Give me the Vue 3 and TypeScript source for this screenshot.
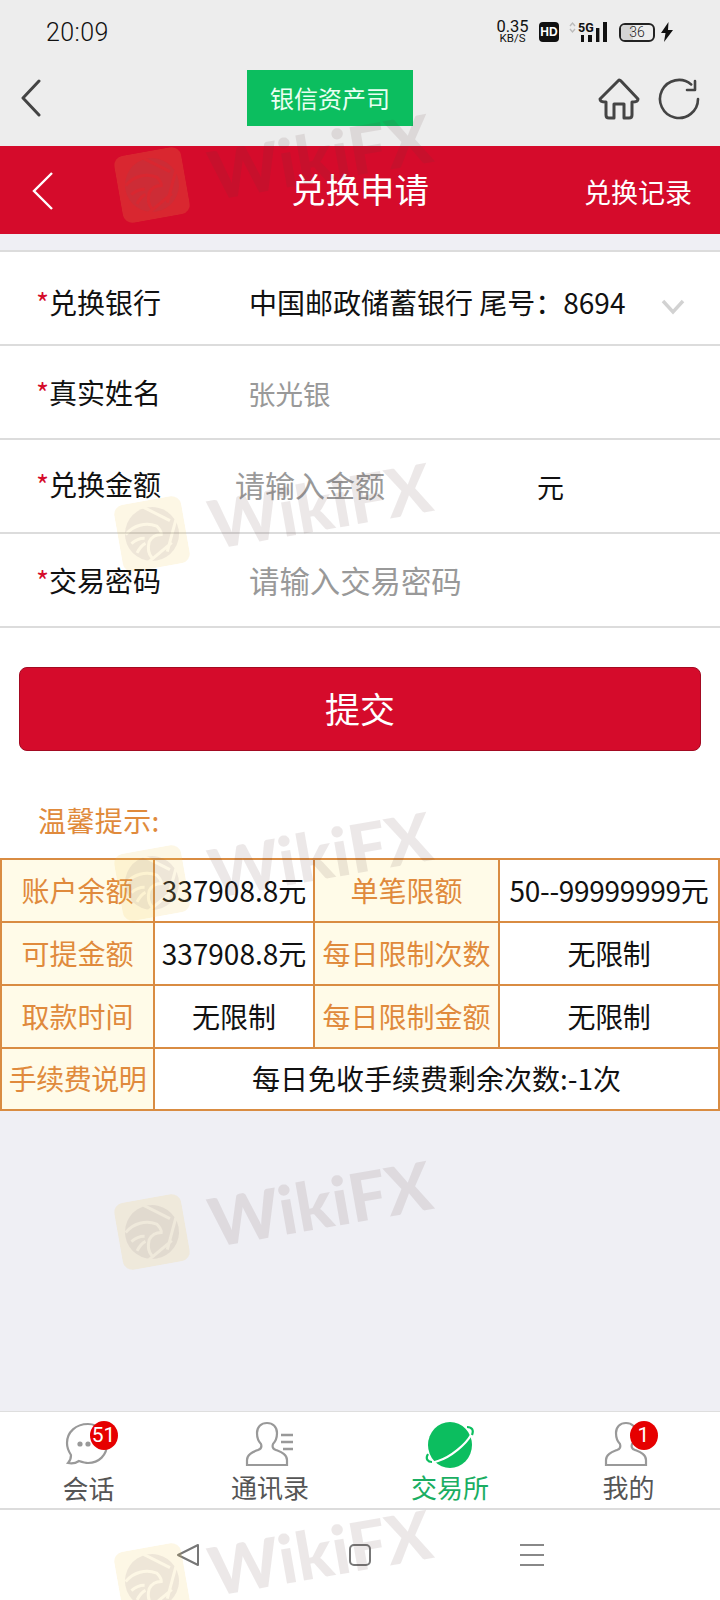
<script setup lang="ts">
const marks = [0, 1, 2, 3, 4].map((i) => 151 + i * 349);

const rows = [
  { label: '账户余额', value: '337908.8元', label2: '单笔限额', value2: '50--99999999元' },
  { label: '可提金额', value: '337908.8元', label2: '每日限制次数', value2: '无限制' },
  { label: '取款时间', value: '无限制', label2: '每日限制金额', value2: '无限制' },
];
</script>

<template>
  <div class="page">
    <header class="top">
      <div class="status">
        <span class="clock">20:09</span>
        <div class="status__right">
          <div class="speed"><b>0.35</b><small>KB/S</small></div>
          <span class="hd">HD</span>
          <svg class="signal" width="38" height="20" viewBox="0 0 38 20">
            <path d="M1 4l2.5-3L6 4M1 7l2.5 3L6 7" fill="none" stroke="#bbb" stroke-width="1.4" />
            <text x="9" y="10" font-size="12.5" font-weight="700" font-family="Roboto, sans-serif" fill="#111">5G</text>
            <rect x="12" y="13" width="3" height="7" fill="#111" />
            <rect x="19" y="13" width="4" height="7" fill="#111" />
            <rect x="27" y="6" width="3.4" height="14" fill="#111" />
            <rect x="34" y="0" width="4" height="20" fill="#111" />
          </svg>
          <div class="battery"><i class="battery__fill"></i><span>36</span></div>
          <svg class="bolt" width="12" height="20" viewBox="0 0 12 20"><path d="M7.5 0L0 11h4.5L3 20l9-12H7z" fill="#111" /></svg>
        </div>
      </div>
      <div class="toolbar">
        <svg class="toolbar__back" width="22" height="38" viewBox="0 0 22 38">
          <path d="M19 2L3 19l16 17" fill="none" stroke="#444" stroke-width="3" stroke-linecap="round" stroke-linejoin="round" />
        </svg>
        <div class="site">银信资产司</div>
        <div class="toolbar__tools">
          <svg width="42" height="42" viewBox="0 0 42 42" fill="none" stroke="#444" stroke-width="3" stroke-linejoin="round" stroke-linecap="round">
            <path d="M21 2L2 21c0 2 2 3 6 3v13c0 2 1 3 3 3h5V26h10v14h5c2 0 3-1 3-3V24c4 0 6-1 6-3L23 3a3 3 0 00-2-1z" />
          </svg>
          <svg width="42" height="42" viewBox="0 0 42 42" fill="none" stroke="#444" stroke-width="2.6" stroke-linecap="round" stroke-linejoin="round">
            <path d="M33.2 6.4A19 19 0 1040 21" />
            <path d="M37 3v9h-8" />
          </svg>
        </div>
      </div>
    </header>

    <div class="titlebar">
      <svg class="titlebar__back" width="22" height="38" viewBox="0 0 22 38">
        <path d="M20 1L2 19l18 18" fill="none" stroke="#fff" stroke-width="2.4" />
      </svg>
      <h1 class="titlebar__title">兑换申请</h1>
      <span class="titlebar__link">兑换记录</span>
    </div>

    <main class="main">
      <section class="card">
        <form class="form" @submit.prevent>
          <div class="row row--bank">
            <label class="row__label"><em>*</em>兑换银行</label>
            <span class="row__value">中国邮政储蓄银行 尾号：8694</span>
            <svg class="row__chevron" width="24" height="16" viewBox="0 0 24 16">
              <path d="M2 2l10 11L22 2" fill="none" stroke="#d2d2d2" stroke-width="3.4" />
            </svg>
          </div>
          <div class="row">
            <label class="row__label"><em>*</em>真实姓名</label>
            <span class="row__value row__value--muted">张光银</span>
          </div>
          <div class="row row--amount">
            <label class="row__label"><em>*</em>兑换金额</label>
            <input class="row__input row__input--amount" placeholder="请输入金额" />
            <span class="row__unit">元</span>
          </div>
          <div class="row">
            <label class="row__label"><em>*</em>交易密码</label>
            <input class="row__input" type="password" placeholder="请输入交易密码" />
          </div>
        </form>

        <button class="submit" type="button">提交</button>

        <p class="hint">温馨提示:</p>

        <table class="limits">
          <colgroup>
            <col class="col-a" />
            <col class="col-b" />
            <col class="col-c" />
            <col />
          </colgroup>
          <tbody>
            <tr v-for="r in rows" :key="r.label">
              <th>{{ r.label }}</th>
              <td>{{ r.value }}</td>
              <th>{{ r.label2 }}</th>
              <td class="narrow">{{ r.value2 }}</td>
            </tr>
            <tr class="last">
              <th class="tight">手续费说明</th>
              <td colspan="3">每日免收手续费剩余次数:-1次</td>
            </tr>
          </tbody>
        </table>
      </section>
    </main>

    <nav class="tabs">
      <div class="tab tab--left">
        <div class="tab__icon tab__icon--chat">
          <svg width="44" height="44" viewBox="0 0 44 44" fill="none" stroke="#999" stroke-width="2.2">
            <path d="M23 2C11 2 2 10 2 21c0 5 2 9 4 12 0 3-1 6-3 8 4 1 8 0 11-2 3 1 6 2 9 2 11 0 19-8 19-19S34 2 23 2z" />
            <circle cx="15" cy="22" r="2.6" fill="#999" stroke="none" />
            <circle cx="23" cy="22" r="2.6" fill="#999" stroke="none" />
          </svg>
          <span class="badge badge--chat">51</span>
        </div>
        <span>会话</span>
      </div>
      <div class="tab">
        <div class="tab__icon">
          <svg width="50" height="46" viewBox="0 0 50 46" fill="none" stroke="#999" stroke-width="2.2">
            <path d="M2 44v-5c0-6 6-8 11-10 3-1 4-3 3-6-3-3-4-7-4-11C12 6 16 2 22 2s10 4 10 10c0 4-1 8-4 11-1 3 0 5 3 6 5 2 11 4 11 10v5z" />
            <path d="M36 14h12M36 21h12M38 28h10" stroke-width="2.6" />
          </svg>
        </div>
        <span>通讯录</span>
      </div>
      <div class="tab tab--active">
        <div class="tab__icon">
          <svg width="50" height="48" viewBox="0 0 50 48">
            <ellipse cx="25" cy="24" rx="22" ry="23" fill="#0cbe5f" />
            <path d="M3 37c-3 5 2 6 10 3 13-4 28-17 33-26 2-5-1-7-5-7" fill="none" stroke="#fff" stroke-width="2.2" />
            <path d="M3 33c-3 5 0 8 4 8M42 6c5 0 7 3 5 8" fill="none" stroke="#0cbe5f" stroke-width="2.2" />
          </svg>
        </div>
        <span>交易所</span>
      </div>
      <div class="tab tab--left">
        <div class="tab__icon tab__icon--me">
          <svg width="46" height="46" viewBox="0 0 46 46" fill="none" stroke="#999" stroke-width="2.2">
            <path d="M2 44v-5c0-6 6-8 11-10 3-1 4-3 3-6-3-3-4-7-4-11C12 6 16 2 22 2s10 4 10 10c0 4-1 8-4 11-1 3 0 5 3 6 5 2 11 4 11 10v5z" />
          </svg>
          <span class="badge badge--me">1</span>
        </div>
        <span>我的</span>
      </div>
    </nav>

    <footer class="sysnav">
      <svg width="24" height="24" viewBox="0 0 24 24" fill="none" stroke="#777" stroke-width="2" stroke-linejoin="round">
        <path d="M22 2v20L2 12z" />
      </svg>
      <svg width="24" height="24" viewBox="0 0 24 24" fill="none" stroke="#777" stroke-width="2">
        <rect x="2" y="2" width="20" height="20" rx="4" />
      </svg>
      <svg width="26" height="24" viewBox="0 0 26 24" fill="none" stroke="#888" stroke-width="2">
        <path d="M1 2h24M1 12h24M1 22h24" />
      </svg>
    </footer>

    <div class="watermarks" aria-hidden="true">
      <div v-for="top in marks" :key="top" class="mark" :style="{ top: top + 'px' }">
        <svg class="mark__logo" width="68" height="68" viewBox="0 0 68 68">
          <defs>
            <mask :id="'cut' + top">
              <rect width="68" height="68" fill="#fff" />
              <g fill="none" stroke="#000" stroke-width="3">
                <path d="M30 6l24 18M60 24L46 54M52 46L24 62" />
                <path d="M8 30c9-8 22-9 32-3 2 3 4 6 3 9-6-1-10 1-13 5-3 6-3 12 0 17" />
                <path d="M12 40c5-3 9-4 14-3M16 50c3-4 6-7 10-8" />
              </g>
            </mask>
          </defs>
          <rect width="68" height="68" rx="10" fill="#f0c850" fill-opacity=".15" />
          <circle cx="34" cy="34" r="27" fill="#6e5a70" fill-opacity=".1" :mask="'url(#cut' + top + ')'" />
        </svg>
        <span class="mark__text">WikiFX</span>
      </div>
    </div>
  </div>
</template>

<style>
html, body { margin: 0; padding: 0; background: #fff; }
</style>

<style scoped>
.page {
  position: relative;
  display: flex; flex-direction: column;
  width: 720px; height: 1600px; overflow: hidden;
  background: #efeff4;
  font-family: "Noto Sans CJK SC", "Noto Sans", sans-serif;
  color: #111;
}

.top { background: #ededed; height: 146px; flex-shrink: 0; }
.status {
  display: flex; align-items: center; justify-content: space-between;
  height: 62px; padding: 2px 47px 0 46px; box-sizing: border-box;
}
.clock { font-family: Roboto, sans-serif; font-size: 25px; font-weight: 300; letter-spacing: .4px; color: #111; }
.status__right { display: flex; align-items: center; }
.speed { display: flex; flex-direction: column; align-items: center; width: 31px; font-family: Roboto, sans-serif; }
.speed b { font-size: 16.5px; font-weight: 400; line-height: 13px; }
.speed small { font-size: 11.5px; font-weight: 400; line-height: 11px; }
.hd {
  width: 20px; height: 20px; margin-left: 11px; border-radius: 4px; background: #111; color: #fff;
  font: 700 12px/20px "Liberation Sans", sans-serif; text-align: center;
}
.signal { margin-left: 10px; overflow: visible; }
.battery {
  position: relative; width: 36px; height: 19px; margin-left: 12px; box-sizing: border-box;
  border: 2px solid #222; border-radius: 6px; overflow: hidden;
  font: 300 14px/15px Roboto, sans-serif; text-align: center; color: #222;
}
.battery__fill { position: absolute; left: 0; top: 0; bottom: 0; width: 36%; background: #d4d4d4; }
.battery span { position: relative; }
.bolt { margin-left: 6px; }

.toolbar { display: flex; align-items: center; justify-content: space-between; height: 84px; padding: 0 20px; position: relative; }
.toolbar__back { margin-top: -12px; }
.site {
  position: absolute; left: 247px; top: 8px;
  width: 166px; height: 56px; background: #0cbe5f; color: #e8fff2;
  font-size: 24px; line-height: 56px; text-align: center;
}
.toolbar__tools { display: flex; gap: 18px; margin-top: -10px; }

.titlebar {
  display: flex; align-items: center; justify-content: center;
  position: relative; height: 88px; flex-shrink: 0; background: #d50b2b; color: #fff;
}
.titlebar__back { position: absolute; left: 32px; top: 26px; }
.titlebar__title { margin: 0 0 4px; font-size: 34.5px; font-weight: 400; line-height: 1; }
.titlebar__link { position: absolute; right: 28px; top: 28px; font-size: 27px; line-height: 36px; }

.main { flex: 1; padding-top: 16px; }
.card { background: #fff; border-top: 2px solid #dcdcdc; }

.row {
  display: flex; align-items: center; height: 92px; padding-left: 36px;
  border-bottom: 2px solid #dcdcdc; font-size: 28px;
}
.row--bank { padding-top: 8px; height: 84px; }
.row--amount { padding-bottom: 4px; height: 88px; }
.row__label { width: 213px; flex-shrink: 0; color: #111; }
.row__label em { color: #d50b2b; font-style: normal; }
.row__value { flex: 1; color: #111; }
.row__value--muted { margin-left: -1px; padding-top: 2px; font-size: 27.5px; color: #999; }
.row__chevron { margin-right: 35px; margin-top: 10px; }
.row__input {
  flex: 1; min-width: 0; padding: 0; border: 0; outline: none; background: transparent;
  font: inherit; font-size: 30.4px; color: #111;
}
.row__input::placeholder { color: #999; opacity: 1; }
.row__input--amount { flex: 0 0 302px; margin-left: -14px; font-size: 30px; }
.row__unit { font-size: 27px; padding-top: 4px; }

.submit {
  display: block; width: 682px; height: 84px; margin: 39px 0 0 19px; padding: 0 0 4px;
  border: 1px solid #a30a22; border-radius: 8px; background: #d50b2b; color: #fff;
  font: inherit; font-size: 35px;
}
.hint { margin: 0; padding: 49px 0 18px 38px; font-size: 28px; line-height: 40px; letter-spacing: .4px; color: #e08a3c; }

.limits {
  width: 720px; table-layout: fixed; border-collapse: collapse;
  font-size: 28px; line-height: 36px;
}
.col-a { width: 153px; }
.col-b { width: 160px; }
.col-c { width: 185px; }
.limits th, .limits td {
  height: 63px; padding: 0 0 2px; box-sizing: border-box; border: 2px solid #d98c42; text-align: center; white-space: nowrap;
}
.limits th { background: #fffbe8; color: #e08a3c; font-weight: 400; }
.limits td { background: #fff; color: #111; }
.limits .narrow { letter-spacing: -.3px; }
.limits .last th, .limits .last td { height: 62px; }
.tight { letter-spacing: -.5px; }

.tabs {
  display: grid; grid-template-columns: repeat(4, 1fr);
  flex-shrink: 0; height: 99px; box-sizing: border-box; padding-top: 9px;
  background: #fff; border-top: 1px solid #dedede; border-bottom: 2px solid #dcdcdc;
}
.tab { display: flex; flex-direction: column; align-items: center; font-size: 26px; line-height: 32px; color: #555; }
.tab--active { color: #1aae62; }
.tab--left { padding-right: 3px; }
.tab__icon { position: relative; height: 50px; display: flex; align-items: flex-start; }
.tab__icon--chat, .tab__icon--me { margin-left: -4px; }
.tab__icon--chat { padding-top: 1px; }
.badge {
  position: absolute; width: 28px; height: 29px; border-radius: 50%; background: #e60000; color: #fff;
  font: 400 21px/29px Roboto, sans-serif; text-align: center;
}
.badge--chat { right: -9px; top: 0; }
.badge--me { right: -8px; top: 0; }

.sysnav {
  display: flex; align-items: center; height: 90px; flex-shrink: 0; background: #fff;
  padding: 0 175px 0 176px; box-sizing: border-box; justify-content: space-between;
}

.watermarks { position: absolute; inset: 0; pointer-events: none; }
.mark {
  position: absolute; left: 118px; height: 68px;
  display: flex; align-items: center; gap: 24px; white-space: nowrap;
  transform: rotate(-10deg); transform-origin: 34px 34px;
}
.mark__logo { flex-shrink: 0; }
.mark__text {
  font-family: Lato, "Noto Sans", sans-serif; font-weight: 900; font-size: 67px; line-height: 68px;
  color: #5a3a3a; opacity: .11;
}
</style>
